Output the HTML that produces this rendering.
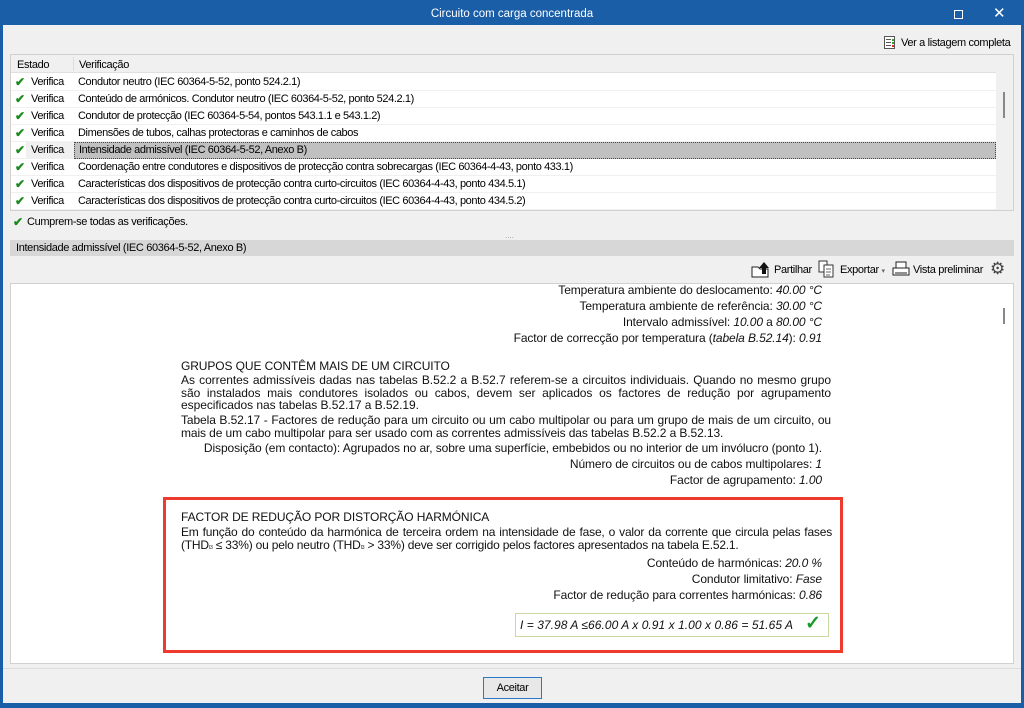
<!DOCTYPE html>
<html><head><meta charset="utf-8"><style>
*{margin:0;padding:0;box-sizing:border-box}
body{width:1024px;height:708px;overflow:hidden;background:#1a5ea8;font-family:"Liberation Sans",sans-serif;position:relative}
.a{position:absolute}
#client{left:3px;top:25px;width:1018px;height:678px;background:#f0f0f0}
.ui{font-size:11px;color:#000;letter-spacing:-0.35px}
.row{position:absolute;left:11px;width:985px;height:17px;border-bottom:1px solid #f0f0f0;font-size:11px;line-height:17px;letter-spacing:-0.4px}
.row .ck{position:absolute;left:4px;color:#1a8a1a;font-weight:bold;font-size:12px}
.row .st{position:absolute;left:20px}
.row .vt{position:absolute;left:67px}
.c{font-size:12px;color:#111;position:absolute;white-space:nowrap;letter-spacing:-0.1px}
.r{right:202px;text-align:right}
.j{text-align:justify;text-align-last:left;width:650px;left:181px;line-height:13px}
i{font-style:italic}
.sb{font-size:5px;vertical-align:0;line-height:0}
</style></head><body>
<div class="a" style="left:0;top:0;width:1024px;height:25px;color:#fff;font-size:11.5px;text-align:center;line-height:28px">Circuito com carga concentrada</div>
<div class="a" style="left:954px;top:10px;width:9px;height:9px;border:1px solid #fff"></div>
<div class="a" style="left:993px;top:4px;color:#fff;font-size:15px">✕</div>
<div class="a" id="client"></div>
<div class="a" style="left:884px;top:36px;width:11px;height:13px;border:1px solid #555;background:#fff"></div>
<div class="a" style="left:886px;top:39px;width:5px;height:1px;background:#555;box-shadow:0 3px #555,0 6px #555"></div>
<div class="a" style="left:892px;top:39px;width:2px;height:2px;background:#2a2;box-shadow:0 3px #2a2,0 6px #e22"></div>
<div class="a ui" style="left:901px;top:37px">Ver a listagem completa</div>
<div class="a" style="left:10px;top:54px;width:1004px;height:157px;background:#fff;border:1px solid #d0d0d0"></div>
<div class="a ui" style="left:11px;top:55px;width:985px;height:18px;background:#f0f0f0;border-bottom:1px solid #e0e0e0"></div>
<div class="a" style="left:73px;top:57px;width:1px;height:14px;background:#ddd"></div>
<div class="a ui" style="left:17px;top:59px">Estado</div>
<div class="a ui" style="left:79px;top:59px">Verificação</div>
<div class="a" style="left:996px;top:55px;width:17px;height:155px;background:#f0f0f0"></div>
<div class="a" style="left:1003px;top:92px;width:2px;height:26px;background:#888"></div>
<div class="row" style="top:74px"><span class="ck">✔</span><span class="st">Verifica</span><span class="vt">Condutor neutro (IEC 60364-5-52, ponto 524.2.1)</span></div>
<div class="row" style="top:91px"><span class="ck">✔</span><span class="st">Verifica</span><span class="vt">Conteúdo de armónicos. Condutor neutro (IEC 60364-5-52, ponto 524.2.1)</span></div>
<div class="row" style="top:108px"><span class="ck">✔</span><span class="st">Verifica</span><span class="vt">Condutor de protecção (IEC 60364-5-54, pontos 543.1.1 e 543.1.2)</span></div>
<div class="row" style="top:125px"><span class="ck">✔</span><span class="st">Verifica</span><span class="vt">Dimensões de tubos, calhas protectoras e caminhos de cabos</span></div>
<div class="row" style="top:142px"><span class="ck">✔</span><span class="st" style="left:15px;padding-left:5px;width:58px;background:#f0f0f0">Verifica</span><span class="vt" style="left:63px;width:922px;padding-left:4px;background:#c0c0c0;border:1px dotted #444;height:17px;line-height:15px">Intensidade admissível (IEC 60364-5-52, Anexo B)</span></div>
<div class="row" style="top:159px"><span class="ck">✔</span><span class="st">Verifica</span><span class="vt">Coordenação entre condutores e dispositivos de protecção contra sobrecargas (IEC 60364-4-43, ponto 433.1)</span></div>
<div class="row" style="top:176px"><span class="ck">✔</span><span class="st">Verifica</span><span class="vt">Características dos dispositivos de protecção contra curto-circuitos (IEC 60364-4-43, ponto 434.5.1)</span></div>
<div class="row" style="top:193px"><span class="ck">✔</span><span class="st">Verifica</span><span class="vt">Características dos dispositivos de protecção contra curto-circuitos (IEC 60364-4-43, ponto 434.5.2)</span></div>
<div class="a ui" style="left:13px;top:215px;color:#1a8a1a;font-weight:bold;font-size:12px">✔</div>
<div class="a ui" style="left:27px;top:216px">Cumprem-se todas as verificações.</div>
<div class="a" style="left:505px;top:231px;color:#999;font-size:8px">....</div>
<div class="a ui" style="left:10px;top:240px;width:1004px;height:16px;background:#d7d7d7;line-height:16px;padding-left:6px">Intensidade admissível (IEC 60364-5-52, Anexo B)</div>
<svg class="a" style="left:750px;top:260px" width="22" height="18"><path d="M2 7h6l2 2h8v8H2z" fill="#fff" stroke="#222"/><path d="M9 8l5-6 5 6h-3v6h-4V8z" fill="#111"/></svg>
<div class="a ui" style="left:774px;top:264px">Partilhar</div>
<svg class="a" style="left:818px;top:260px" width="18" height="18"><rect x="1" y="1" width="8" height="11" fill="#fff" stroke="#333"/><rect x="6" y="5" width="9" height="12" fill="#fff" stroke="#333"/><path d="M8 9h5M8 12h5M8 15h4" stroke="#666"/></svg>
<div class="a ui" style="left:840px;top:264px">Exportar <span style="font-size:7px;color:#666">▾</span></div>
<svg class="a" style="left:892px;top:261px" width="18" height="16"><rect x="4" y="1" width="10" height="6" fill="#fff" stroke="#222"/><rect x="1" y="7" width="16" height="7" fill="#fff" stroke="#222"/><path d="M3 12h12" stroke="#222"/></svg>
<div class="a ui" style="left:913px;top:264px">Vista preliminar</div>
<div class="a" style="left:990px;top:259px;font-size:17px;color:#444">⚙</div>
<div class="a" style="left:10px;top:283px;width:1004px;height:381px;background:#fff;border:1px solid #d0d0d0"></div>
<div class="a" style="left:1003px;top:308px;width:2px;height:16px;background:#888"></div>
<div class="c r" style="top:283px">Temperatura ambiente do deslocamento: <i>40.00 °C</i></div>
<div class="c r" style="top:299px">Temperatura ambiente de referência: <i>30.00 °C</i></div>
<div class="c r" style="top:315px">Intervalo admissível: <i>10.00</i> a <i>80.00 °C</i></div>
<div class="c r" style="top:331px">Factor de correcção por temperatura (<i>tabela B.52.14</i>): <i>0.91</i></div>
<div class="c" style="left:181px;top:359px">GRUPOS QUE CONTÊM MAIS DE UM CIRCUITO</div>
<div class="c j" style="top:374px;white-space:normal;letter-spacing:-0.05px;line-height:12.5px">As correntes admissíveis dadas nas tabelas B.52.2 a B.52.7 referem-se a circuitos individuais. Quando no mesmo grupo são instalados mais condutores isolados ou cabos, devem ser aplicados os factores de redução por agrupamento especificados nas tabelas B.52.17 a B.52.19.</div>
<div class="c j" style="top:414px;white-space:normal;letter-spacing:-0.1px">Tabela B.52.17 - Factores de redução para um circuito ou um cabo multipolar ou para um grupo de mais de um circuito, ou mais de um cabo multipolar para ser usado com as correntes admissíveis das tabelas B.52.2 a B.52.13.</div>
<div class="c r" style="top:441px;letter-spacing:-0.1px">Disposição (em contacto): Agrupados no ar, sobre uma superfície, embebidos ou no interior de um invólucro (ponto 1).</div>
<div class="c r" style="top:457px">Número de circuitos ou de cabos multipolares: <i>1</i></div>
<div class="c r" style="top:473px">Factor de agrupamento: <i>1.00</i></div>
<div class="a" style="left:163px;top:497px;width:680px;height:156px;border:3px solid #ee3b2e"></div>
<div class="c" style="left:181px;top:510px">FACTOR DE REDUÇÃO POR DISTORÇÃO HARMÓNICA</div>
<div class="c j" style="top:526px;white-space:normal;width:651px;letter-spacing:-0.2px">Em função do conteúdo da harmónica de terceira ordem na intensidade de fase, o valor da corrente que circula pelas fases (THD<span class="sb">I3</span> ≤ 33%) ou pelo neutro (THD<span class="sb">I3</span> &gt; 33%) deve ser corrigido pelos factores apresentados na tabela E.52.1.</div>
<div class="c r" style="top:556px">Conteúdo de harmónicas: <i>20.0 %</i></div>
<div class="c r" style="top:572px">Condutor limitativo: <i>Fase</i></div>
<div class="c r" style="top:588px">Factor de redução para correntes harmónicas: <i>0.86</i></div>
<div class="a" style="left:515px;top:613px;width:314px;height:24px;border:1px solid #c8d8a0;background:#fff"></div>
<div class="c" style="left:520px;top:618px;letter-spacing:0.05px"><i>I = 37.98 A ≤66.00 A x 0.91 x 1.00 x 0.86 = 51.65 A</i></div>
<div class="a" style="left:805px;top:612px;color:#1a9a2a;font-size:19px;font-weight:bold">✓</div>
<div class="a" style="left:3px;top:668px;width:1018px;height:1px;background:#ddd"></div>
<div class="a ui" style="left:483px;top:677px;width:59px;height:22px;border:1px solid #2a78c8;background:#e8e8e8;text-align:center;line-height:20px">Aceitar</div>
</body></html>
